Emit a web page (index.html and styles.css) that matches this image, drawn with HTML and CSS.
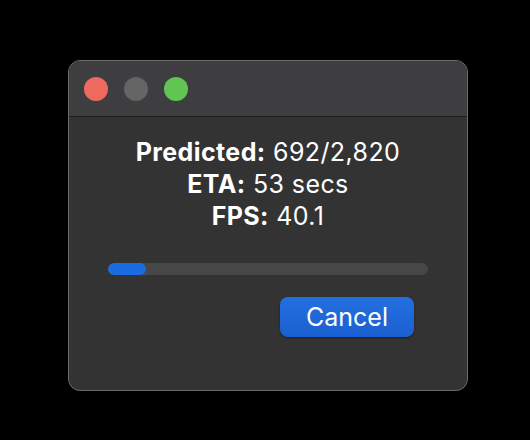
FILE: index.html
```html
<!DOCTYPE html>
<html lang="en">
<head>
    <meta charset="UTF-8">
    <title>Progress</title>
    <link rel="stylesheet" href="styles.css">
</head>
<body>

<div class="window">
    <div class="titlebar">
        <span class="light red"></span>
        <span class="light grey"></span>
        <span class="light green"></span>
    </div>
    <div class="content">
        <div class="stats">
            <p><b>Predicted:</b> 692/2,820</p>
            <p><b>ETA:</b> 53 secs</p>
            <p><b>FPS:</b> 40.1</p>
        </div>
        <div class="progress">
            <div class="progress-fill" style="width: 12%;"></div>
        </div>
        <div class="actions">
            <button class="cancel-button">Cancel</button>
        </div>
    </div>
</div>

</body>
</html>
```

FILE: styles.css
```css
/* Общие стили */
html, body {
    margin: 0;
    padding: 0;
    background-color: #000000;
    font-family: 'Inter', 'Roboto', sans-serif;
    color: #ffffff;
}

body {
    padding: 60px 0 0 68px;
}

.window {
    width: 400px;
    height: 331px;
    box-sizing: border-box;
    border: 1px solid #6b6b6b;
    border-radius: 12px;
    background-color: #333333;
    overflow: hidden;
    display: flex;
    flex-direction: column;
}

/* Заголовок окна */
.titlebar {
    height: 56px;
    box-sizing: border-box;
    background-color: #3e3e40;
    border-bottom: 1px solid #1c1c1c;
    display: flex;
    align-items: center;
    gap: 16px;
    padding-left: 15px;
}

.light {
    width: 24px;
    height: 24px;
    border-radius: 50%;
}

.red { background-color: #ee6a5f; }
.grey { background-color: #656565; }
.green { background-color: #61c554; }

/* Содержимое */
.content {
    flex: 1;
    padding: 19px 39px 0;
}

.stats {
    text-align: center;
    font-size: 25px;
    line-height: 32px;
    letter-spacing: 0.4px;
}

.stats p {
    margin: 0;
}

.progress {
    margin-top: 31px;
    height: 12px;
    border-radius: 6px;
    background-color: #474747;
    overflow: hidden;
}

.progress-fill {
    height: 100%;
    border-radius: 6px;
    background-color: #1b6ce2;
}

.actions {
    display: flex;
    justify-content: flex-end;
    margin-top: 22px;
    padding-right: 14px;
}

.cancel-button {
    width: 134px;
    height: 40px;
    border: none;
    border-radius: 8px;
    background: linear-gradient(#2470e0, #1a5fd0);
    box-shadow: 0 1px 2px rgba(0, 0, 0, 0.5);
    color: #ffffff;
    font-family: inherit;
    font-size: 25px;
    cursor: pointer;
}
```
